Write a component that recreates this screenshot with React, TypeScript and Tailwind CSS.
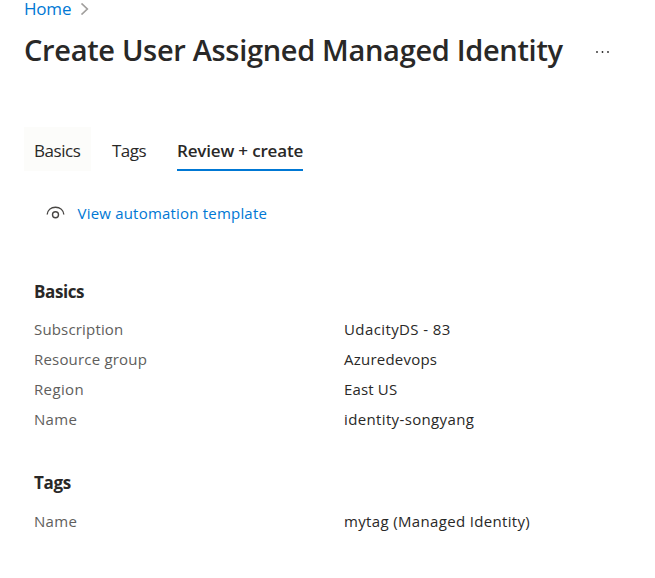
const basics = [
  { label: 'Subscription', labelClass: 'tracking-[0.17px]', value: 'UdacityDS - 83', valueClass: 'tracking-[0.4px]' },
  { label: 'Resource group', labelClass: 'tracking-[0.19px]', value: 'Azuredevops', valueClass: 'tracking-[0.23px]' },
  { label: 'Region', labelClass: 'tracking-[0.35px]', value: 'East US', valueClass: 'tracking-[0.15px]' },
  { label: 'Name', labelClass: 'tracking-[0.3px]', value: 'identity-songyang', valueClass: 'tracking-[0.36px]' },
];

const tags = [
  { label: 'Name', labelClass: 'tracking-[0.3px]', value: 'mytag (Managed Identity)', valueClass: 'tracking-[0.34px]' },
];

type Row = (typeof basics)[number];

function Rows({ rows }: { rows: Row[] }) {
  return (
    <dl>
      {rows.map((row) => (
        <div key={row.label} className="flex h-[30px] text-[15px] leading-[30px]">
          <dt className="w-[310px] text-[#605e5c]">
            <span className={row.labelClass}>{row.label}</span>
          </dt>
          <dd className="text-[#292827]">
            <span className={row.valueClass}>{row.value}</span>
          </dd>
        </div>
      ))}
    </dl>
  );
}

export default function App() {
  return (
    <main className="h-[578px] w-[655px] bg-white pl-6 font-['Open_Sans','Noto_Sans',sans-serif] text-[#292827]">
      <nav className="flex h-[18px] items-center text-[17px] leading-[18px]">
        <a className="tracking-[-0.2px] text-[#0078d4]">Home</a>
        <svg className="ml-[9px]" width="9" height="12" viewBox="0 0 9 12" fill="none" stroke="#a19f9d" strokeWidth="1.7">
          <path d="M1.500 .5 7.300 6l-5.800 5.500" />
        </svg>
      </nav>

      <header className="mt-[12px] flex h-10 items-center">
        <h1 className="w-[571px] whitespace-nowrap text-[29px] font-semibold leading-10 tracking-[-0.32px]">
          Create User Assigned Managed Identity
        </h1>
        <svg className="mt-[3px]" width="16" height="4" viewBox="0 0 16 4" fill="#292827">
          <circle cx="2" cy="2" r="0.9" />
          <circle cx="7.5" cy="2" r="0.9" />
          <circle cx="13" cy="2" r="0.9" />
        </svg>
      </header>

      <div className="mt-[57px] flex h-11 text-[17px] leading-[48px]">
        <div className="w-[67px] bg-[#fcfcfa] pl-[10px] tracking-[-0.45px]">Basics</div>
        <div className="ml-[21px] w-[65px] tracking-[-0.5px]">Tags</div>
        <div className="w-[126px] whitespace-nowrap border-b-2 border-[#0078d4] font-semibold tracking-[-0.17px]">
          Review + create
        </div>
      </div>

      <a className="mt-8 flex h-5 items-center pl-[22px] text-[15px] leading-5 text-[#0078d4]">
        <svg className="mr-[12.5px]" width="19" height="14" viewBox="0 0 19 14" fill="none" stroke="#484644" strokeWidth="1.4">
          <path d="M1.200 8.500C1.500 4 5 1.200 9.500 1.200S17.500 4 17.800 8.500" />
          <circle cx="9.5" cy="8.700" r="3" />
        </svg>
        <span className="tracking-[0.2px]">View automation template</span>
      </a>

      <section className="mt-[57px] pl-[10px]">
        <h2 className="mb-[10px] text-[17px] font-bold leading-6 tracking-[-0.4px]">Basics</h2>
        <Rows rows={basics} />
      </section>
      <section className="mt-[37px] pl-[10px]">
        <h2 className="mb-[11px] text-[17px] font-bold leading-6 tracking-[-0.3px]">Tags</h2>
        <Rows rows={tags} />
      </section>
    </main>
  );
}
